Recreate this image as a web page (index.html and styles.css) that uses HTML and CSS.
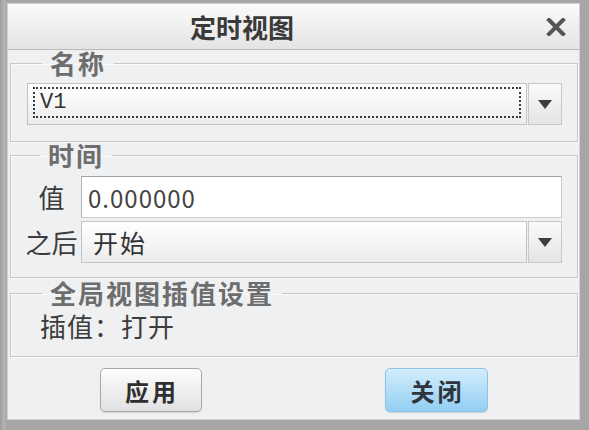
FILE: index.html
```html
<!DOCTYPE html>
<html lang="zh">
<head>
<meta charset="utf-8">
<title>定时视图</title>
<link rel="stylesheet" href="styles.css">
</head>
<body>
<div class="dialog">
  <div class="titlebar">
    <span class="title">定时视图</span>
    <svg class="close" width="20" height="18" viewBox="0 0 20 18" aria-label="关闭">
      <path d="M3 2 L17 16 M17 2 L3 16" stroke="#555" stroke-width="4" stroke-linecap="square" fill="none"/>
    </svg>
  </div>

  <fieldset class="group">
    <legend>名称</legend>
    <div class="body body-name">
      <div class="combo">
        <div class="combo-field"><span class="focus-ring mono">V1</span></div>
        <div class="combo-btn"><svg width="14" height="9" viewBox="0 0 14 9"><path d="M0 0 H14 L7 9 Z" fill="#3d3d3d"/></svg></div>
      </div>
    </div>
  </fieldset>

  <fieldset class="group group-time">
    <legend>时间</legend>
    <div class="body body-time">
      <span class="label">值</span>
      <div class="input"><span class="num">0.000000</span></div>
      <span class="label">之后</span>
      <div class="combo combo-short">
        <div class="combo-field"><span class="combo-text">开始</span></div>
        <div class="combo-btn"><svg width="14" height="9" viewBox="0 0 14 9"><path d="M0 0 H14 L7 9 Z" fill="#3d3d3d"/></svg></div>
      </div>
    </div>
  </fieldset>

  <fieldset class="group group-interp">
    <legend>全局视图插值设置</legend>
    <div class="body body-interp">插值：打开</div>
  </fieldset>

  <div class="actions">
    <button class="btn">应用</button>
    <button class="btn btn-primary">关闭</button>
  </div>
</div>
</body>
</html>
```

FILE: styles.css
```css
html, body {
  margin: 0;
  padding: 0;
}
body {
  width: 589px;
  height: 430px;
  background: linear-gradient(90deg, #9c9c9c 0, #b4b4b4 4px, #a6a6a6 7px);
  font-family: "Noto Sans CJK SC", "Noto Sans", sans-serif;
  overflow: hidden;
}
.dialog {
  margin: 3px 9px 10px 7px;
  width: 571px;
  height: 415px;
  border: 1px solid #d2d2d2;
  background: #eff0f2;
  display: flex;
  flex-direction: column;
}
.titlebar {
  height: 45px;
  border-bottom: 1px solid #b9b9b9;
  background: linear-gradient(#fbfbfb, #e4e4e4);
  display: flex;
  align-items: center;
  padding-left: 182px;
  padding-right: 13px;
}
.title {
  flex: 1;
  font-size: 26px;
  font-weight: 700;
  color: #3a3a3a;
  line-height: 30px;
}
.close {
  display: block;
}
.group {
  margin: 1px 1px 0 2px;
  padding: 0;
  border: 1px solid #c7c8ca;
  box-shadow: inset 1px 1px 0 #fafafa, 1px 1px 0 #fafafa;
  min-inline-size: 0;
}
.group legend {
  margin-left: 31px;
  padding: 0 8px;
  font-size: 26px;
  font-weight: 700;
  line-height: 24px;
  letter-spacing: 2px;
  color: #6d6d6d;
}
.group-time legend {
  margin-left: 29px;
}
.group-interp {
  margin-top: 3px;
}
.body-name {
  padding: 8px 15px 16px 16px;
}
.combo {
  display: flex;
  height: 42px;
}
.combo-field {
  flex: 1;
  border: 1px solid #c3c3c5;
  background: linear-gradient(#ffffff, #ececec);
  display: flex;
}
.focus-ring {
  flex: 1;
  margin: 3px 5px 6px 5px;
  border: 2px dotted #3a3a3a;
  padding-left: 5px;
  display: flex;
  align-items: center;
}
.mono {
  font-family: "Liberation Mono", monospace;
  font-size: 22px;
  color: #333;
}
.combo-btn {
  width: 32px;
  margin-left: 1px;
  border: 1px solid #c8c8ca;
  background: linear-gradient(#fafafa, #e4e4e4);
  display: flex;
  align-items: center;
  justify-content: center;
}
.body-time {
  padding: 9px 15px 14px 11px;
  display: grid;
  grid-template-columns: 59px 1fr;
  grid-auto-rows: 42px;
  row-gap: 3px;
  align-items: center;
}
.label {
  text-align: center;
  font-size: 26px;
  color: #3c3c3c;
  line-height: 30px;
}
.input {
  height: 42px;
  box-sizing: border-box;
  background: #fff;
  border: 1px solid #cdcdcf;
  border-top-color: #a3a3a3;
  border-left-color: #b5b5b5;
  padding-left: 6px;
  display: flex;
  align-items: center;
}
.num {
  font-size: 24px;
  letter-spacing: 1px;
  color: #444;
}
.combo-short .combo-field {
  padding-left: 11px;
  align-items: center;
}
.combo-text {
  font-size: 25px;
  letter-spacing: 2px;
  color: #333;
}
.body-interp {
  padding: 6px 0 15px 29px;
  font-size: 26px;
  line-height: 30px;
  letter-spacing: 1px;
  color: #3c3c3c;
}
.actions {
  flex: 1;
  display: flex;
  justify-content: center;
  align-items: flex-start;
  gap: 183px;
  padding-top: 11px;
}
.btn {
  width: 102px;
  height: 44px;
  border: 1px solid #a9a9ab;
  border-radius: 5px;
  background: linear-gradient(#fdfdfd, #e1e1e3);
  box-shadow: 0 1px 1px rgba(0,0,0,0.12);
  font-family: "Noto Sans CJK SC", sans-serif;
  font-size: 24px;
  font-weight: 700;
  letter-spacing: 3px;
  padding: 0 0 0 3px;
  color: #2f2f2f;
}
.btn-primary {
  width: 103px;
  border-color: #8dc3e8;
  background: linear-gradient(#d3edfc, #93cff3);
  color: #2e3540;
}
```
